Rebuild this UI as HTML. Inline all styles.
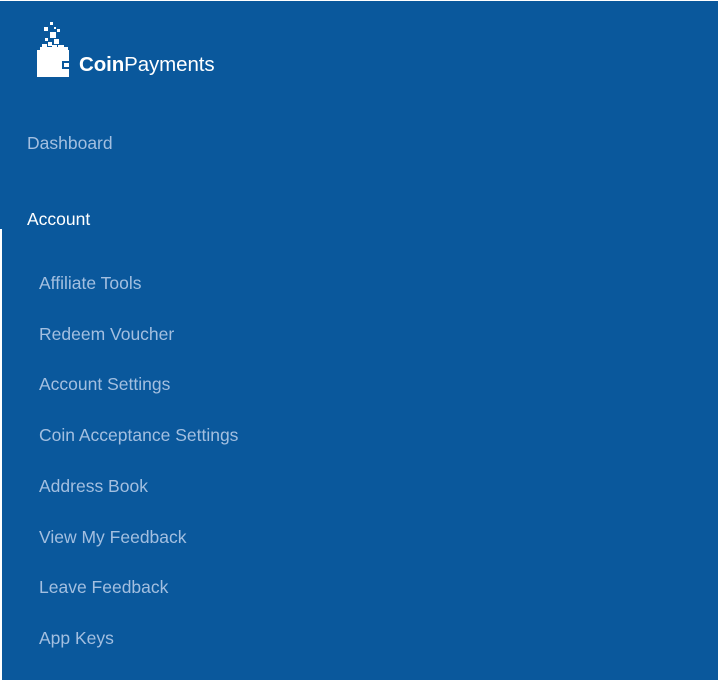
<!DOCTYPE html>
<html><head><style>
html,body{margin:0;padding:0}
body{width:720px;height:680px;background:#fff;position:relative;overflow:hidden;font-family:"Liberation Sans",sans-serif}
#bg{position:absolute;left:0;top:1px;width:718px;height:679px;background:#0a589c}
#strip{position:absolute;left:0;top:229px;width:2px;height:451px;background:#fff}
.it{position:absolute;font-size:17.5px;color:#a3bfe0;white-space:nowrap;letter-spacing:0}
.logo{position:absolute;left:79px;top:53px;font-size:20.5px;color:#fff;letter-spacing:-0.1px}
</style></head><body>
<div id="bg"></div>
<div id="strip"></div>
<svg style="position:absolute;left:30px;top:15px" width="45" height="65" viewBox="0 0 45 65" fill="#fff">
<rect x="7" y="35" width="32" height="27"/>
<rect x="32" y="46" width="7" height="8" fill="#0a589c"/>
<rect x="34" y="48" width="5" height="4" fill="#fff"/>
<rect x="20" y="7" width="3" height="3"/><rect x="14" y="12" width="4" height="4"/>
<rect x="24" y="12" width="2" height="2"/><rect x="27" y="14" width="3" height="3"/>
<rect x="20" y="17" width="6" height="6"/><rect x="15" y="23" width="3" height="3"/>
<rect x="24" y="24" width="5" height="5"/><rect x="12" y="29" width="5" height="5"/>
<rect x="18" y="27" width="4" height="4"/><rect x="22" y="30" width="5" height="5"/>
<rect x="28" y="30" width="6" height="5"/><rect x="10" y="32" width="28" height="3"/>
</svg>
<div class="logo"><b>Coin</b>Payments</div>
<div class="it" style="left:27px;top:133px">Dashboard</div>
<div class="it" style="left:27px;top:209px;color:#fff">Account</div>
<div class="it" style="left:39px;top:273px">Affiliate Tools</div>
<div class="it" style="left:39px;top:324px">Redeem Voucher</div>
<div class="it" style="left:39px;top:374px">Account Settings</div>
<div class="it" style="left:39px;top:425px">Coin Acceptance Settings</div>
<div class="it" style="left:39px;top:476px">Address Book</div>
<div class="it" style="left:39px;top:527px">View My Feedback</div>
<div class="it" style="left:39px;top:577px">Leave Feedback</div>
<div class="it" style="left:39px;top:628px">App Keys</div>
</body></html>
